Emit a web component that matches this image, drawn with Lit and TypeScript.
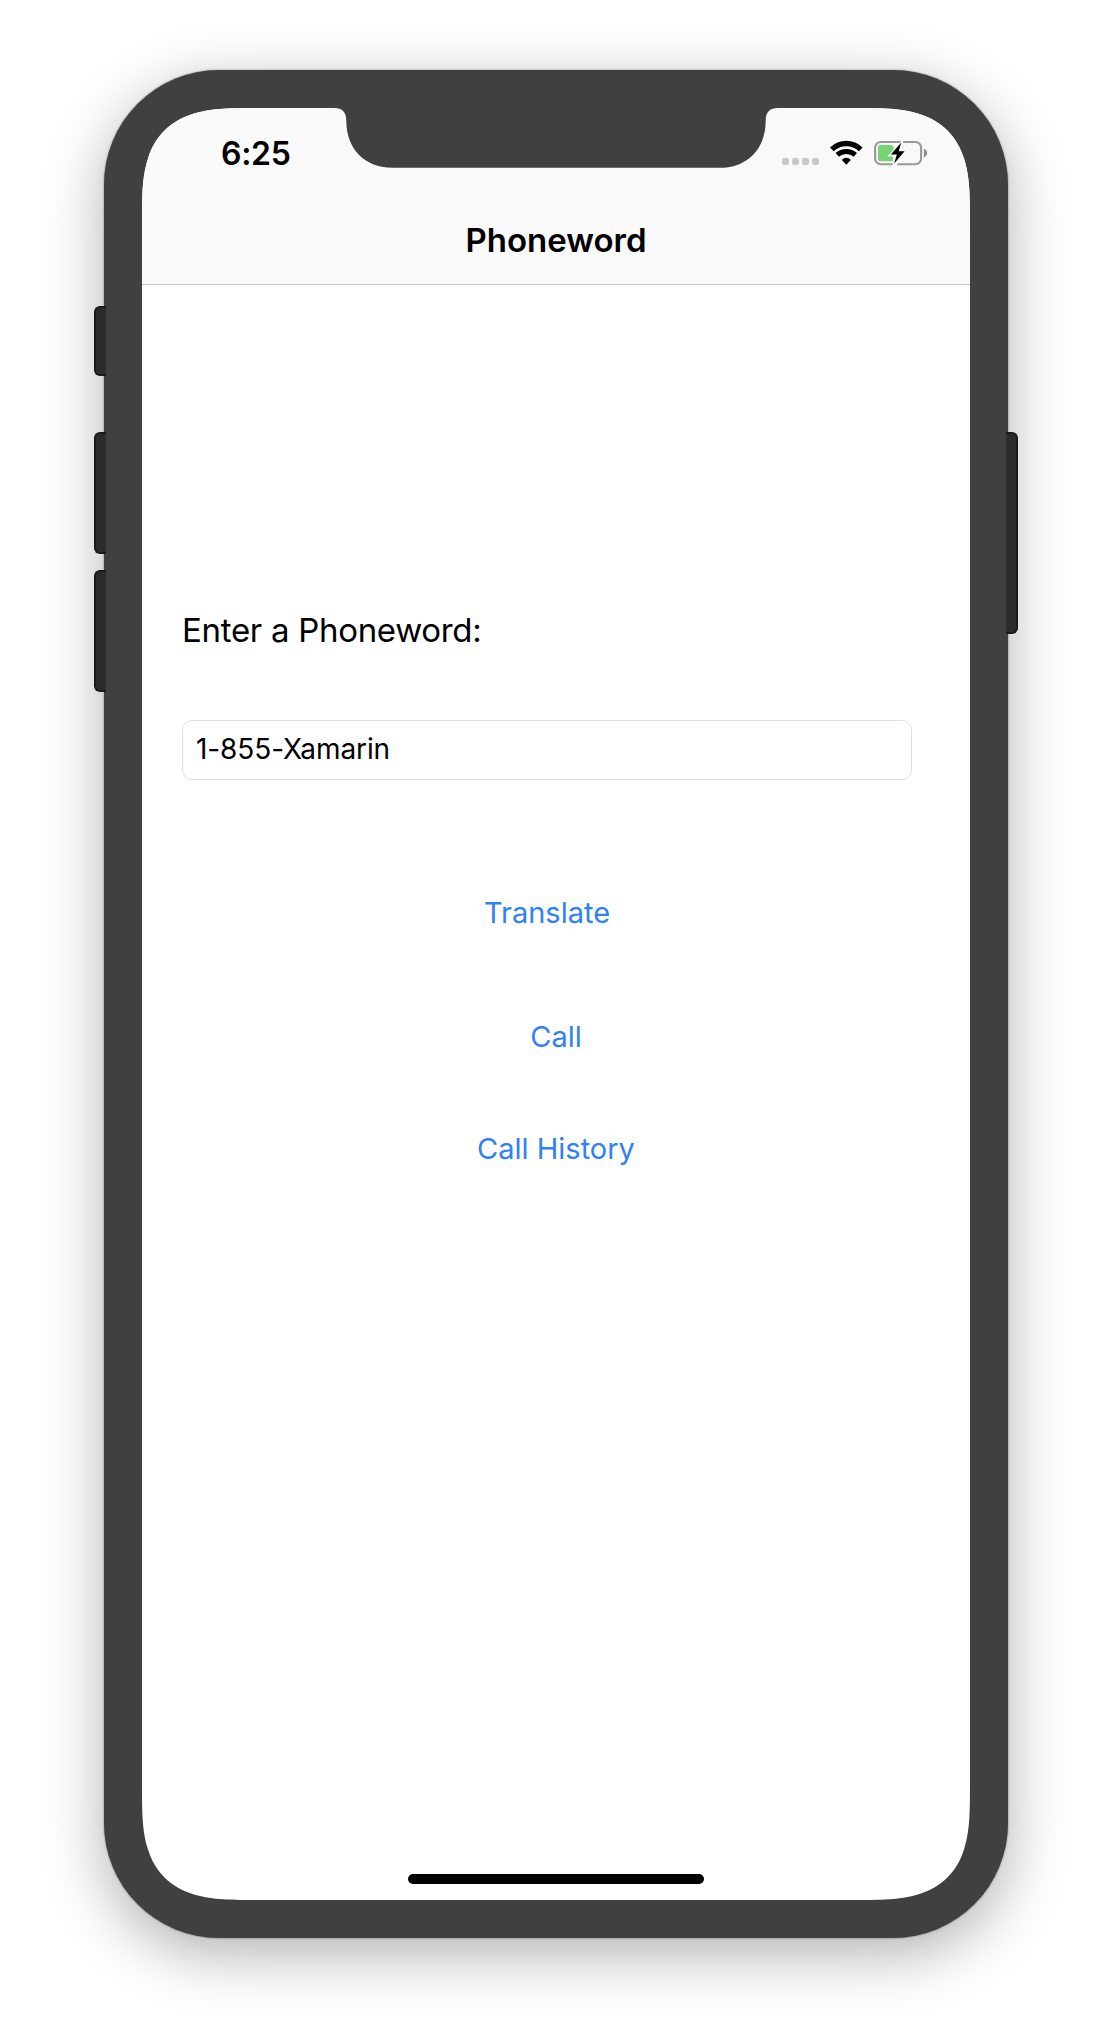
import { LitElement, html, svg, css } from "lit";
import { customElement, property } from "lit/decorators.js";

@customElement("status-icons")
class StatusIcons extends LitElement {
  static styles = css`
    :host { display: block; }
    svg { display: block; }
  `;
  render() {
    return html`
      <svg width="146" height="26" viewBox="782 140 146 26">
        ${[782, 792, 802, 812].map(
          (x) => svg`<rect x=${x} y="158" width="7" height="7" rx="2.2" fill="#c8c8c8"></rect>`
        )}
        <path d="M831.9 149.4 C840 141.6 852.6 141.6 860.7 149.4" fill="none" stroke="#000" stroke-width="5.4"></path>
        <path d="M837.3 154.9 C842.4 150.4 850.2 150.4 855.3 154.9" fill="none" stroke="#000" stroke-width="5"></path>
        <path d="M841.8 160 C844.6 156.9 848 156.9 850.8 160 L846.3 164.7 Z" fill="#000"></path>
        <rect x="875.1" y="142" width="46" height="22.2" rx="5.6" fill="none" stroke="#999" stroke-width="2.1"></rect>
        <path d="M923.9 148.7 Q927.2 150.2 927.2 153.1 Q927.2 156 923.9 157.5 Z" fill="#8c8c8c"></path>
        <rect x="878" y="145" width="15.6" height="16.2" rx="2.8" fill="#76d572"></rect>
        <path d="M902.3 140 L887.2 156.4 L893.6 156.4 L892.2 166 L896 166 L908 150.8 L901.3 150.8 L903.6 140 Z" fill="#f9f9f9"></path>
        <path d="M901.2 142.6 L890.8 154.6 L896.8 154.6 L894.2 163.4 L904.6 151.3 L898.8 151.3 Z" fill="#000"></path>
      </svg>
    `;
  }
}

@customElement("side-keys")
class SideKeys extends LitElement {
  @property() side = "left";
  static styles = css`
    :host { display: block; width: 12px; position: relative; z-index: 1; }
    .rail { display: flex; flex-direction: column; }
    .rail.left { padding-top: 236px; }
    .rail.right { padding-top: 362px; }
    .key { box-sizing: border-box; background: #2b2b2b; border: 2px solid #191919; }
    .left .key { border-right: 0; border-radius: 6px 0 0 6px; }
    .right .key { border-left: 0; border-radius: 0 6px 6px 0; }
    .mute { height: 70px; margin-bottom: 56px; }
    .volume { height: 122px; margin-bottom: 16px; }
    .power { height: 202px; }
  `;
  render() {
    return this.side === "left"
      ? html`<div class="rail left">
          <div class="key mute"></div>
          <div class="key volume"></div>
          <div class="key volume"></div>
        </div>`
      : html`<div class="rail right"><div class="key power"></div></div>`;
  }
}

@customElement("app-root")
class AppRoot extends LitElement {
  static styles = css`
    :host {
      display: block;
      width: 1112px;
      height: 2040px;
      background: #fff;
      overflow: hidden;
      font-family: Inter, "Liberation Sans", sans-serif;
      color: #000;
    }
    .device { display: flex; justify-content: center; padding-top: 70px; }
    .device side-keys:first-child { margin-right: -2px; }
    .device side-keys:last-child { margin-left: -2px; }
    .body {
      box-sizing: border-box;
      width: 904px;
      height: 1868px;
      padding: 38px;
      border-radius: 115px;
      background: #404040;
      box-shadow: 0 0 2px rgba(0, 0, 0, 0.5), 0 16px 60px rgba(0, 0, 0, 0.31);
    }
    .screen {
      position: relative;
      display: flex;
      flex-direction: column;
      width: 828px;
      height: 1792px;
      background: #fff;
      clip-path: path("M122.3 0 L705.7 0 C740.9 0 758.5 0 777.5 6 C799.5 12.8 815.2 28.5 822 50.5 C828 69.5 828 87.1 828 122.3 L828 1669.7 C828 1704.9 828 1722.5 822 1741.5 C815.2 1763.5 799.5 1779.2 777.5 1786 C758.5 1792 740.9 1792 705.7 1792 L122.3 1792 C87.1 1792 69.5 1792 50.5 1786 C28.5 1779.2 12.8 1763.5 6 1741.5 C0 1722.5 0 1704.9 0 1669.7 L0 122.3 C0 87.1 0 69.5 6 50.5 C12.8 28.5 28.5 12.8 50.5 6 C69.5 0 87.1 0 122.3 0 Z");
    }
    .notch { position: absolute; left: 190px; top: 0; display: block; }
    .bar {
      box-sizing: border-box;
      flex: none;
      height: 177px;
      background: #f9f9f9;
      border-bottom: 1px solid #c9c9c9;
    }
    .status {
      box-sizing: border-box;
      display: flex;
      justify-content: space-between;
      height: 105px;
      padding: 26px 42px 0 79px;
    }
    .time { font-size: 32px; line-height: 40px; font-weight: 600; letter-spacing: -0.3px; }
    .status status-icons { padding-top: 6px; }
    .title { padding-top: 7px; font-size: 33px; line-height: 40px; font-weight: 600; text-align: center; }
    .content { display: flex; flex-direction: column; flex: 1; padding: 325px 58px 0 40px; }
    .label { font-size: 33px; line-height: 40px; letter-spacing: -0.3px; }
    .field {
      box-sizing: border-box;
      height: 60px;
      margin-top: 70px;
      padding-left: 13px;
      border: 1px solid #dedede;
      border-radius: 10px;
      font-size: 28px;
      line-height: 57px;
      letter-spacing: -0.1px;
    }
    .action { font-size: 29px; line-height: 40px; color: #3080f6; text-align: center; }
    .translate { margin-top: 113px; }
    .call { margin: 84px -18px 0 0; }
    .history { margin: 72px -18px 0 0; }
    .home { width: 296px; height: 10px; margin: 0 auto 16px; border-radius: 5px; background: #000; }
  `;
  render() {
    return html`
      <div class="device">
        <side-keys side="left"></side-keys>
        <div class="body">
          <div class="screen">
            <div class="bar">
              <div class="status">
                <span class="time">6:25</span>
                <status-icons></status-icons>
              </div>
              <div class="title"><span>Phoneword</span></div>
            </div>
            <div class="content">
              <div class="label"><span>Enter a Phoneword:</span></div>
              <div class="field"><span>1-855-Xamarin</span></div>
              <div class="action translate"><span>Translate</span></div>
              <div class="action call"><span>Call</span></div>
              <div class="action history"><span>Call History</span></div>
            </div>
            <div class="home"></div>
            <svg class="notch" width="448" height="60" viewBox="190 0 448 60">
              <path fill="#404040" d="M190 0 L192 0 C200.5 0 204.3 4 204.3 13 C204.3 40 222 59.7 250 59.7 L578 59.7 C606 59.7 623.7 40 623.7 13 C623.7 4 627.5 0 636 0 Z"></path>
            </svg>
          </div>
        </div>
        <side-keys side="right"></side-keys>
      </div>
    `;
  }
}
